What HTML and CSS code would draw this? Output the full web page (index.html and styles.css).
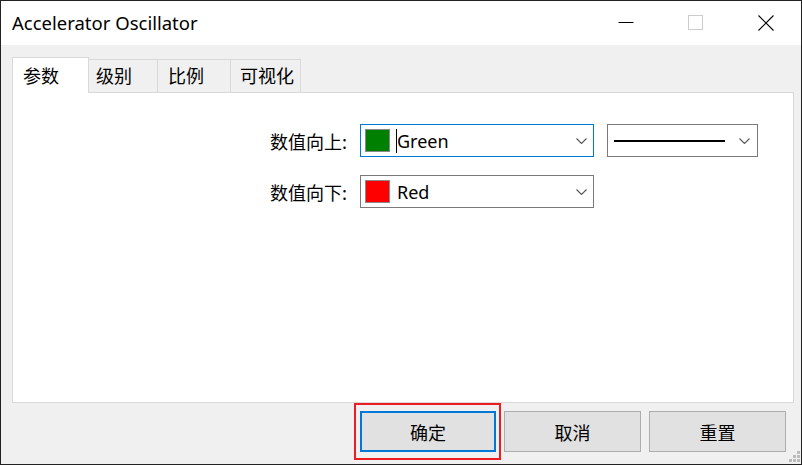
FILE: index.html
```
<!DOCTYPE html>
<html lang="zh-CN">
<head>
<meta charset="utf-8">
<title>Accelerator Oscillator</title>
<link rel="stylesheet" href="styles.css">
</head>
<body>
<div class="window">
  <div class="titlebar">
    <div class="title">Accelerator Oscillator</div>
    <div class="controls">
      <div class="ctl"><svg width="16" height="16" viewBox="0 0 16 16"><line x1="0.5" y1="7.5" x2="15.5" y2="7.5" stroke="#000" stroke-width="1"/></svg></div>
      <div class="ctl"><svg width="16" height="16" viewBox="0 0 16 16"><rect x="0.5" y="0.5" width="14" height="14" fill="none" stroke="#cccccc" stroke-width="1"/></svg></div>
      <div class="ctl"><svg width="16" height="16" viewBox="0 0 16 16"><path d="M0.5 0.5 L15.5 15.5 M15.5 0.5 L0.5 15.5" stroke="#000" stroke-width="1.1" fill="none"/></svg></div>
    </div>
  </div>
  <div class="content">
    <div class="tabs">
      <div class="tab active">参数</div>
      <div class="tab">级别</div>
      <div class="tab">比例</div>
      <div class="tab">可视化</div>
    </div>
    <div class="panel">
      <div class="form">
        <div class="lbl">数值向上:</div>
        <div class="combo focused">
          <span class="swatch green"></span><span class="caret"></span><span class="val">Green</span>
          <svg class="chev" width="11" height="6" viewBox="0 0 11 6"><path d="M0.5 0.5 L5.5 5.5 L10.5 0.5" fill="none" stroke="#555" stroke-width="1.1"/></svg>
        </div>
        <div class="combo linecombo">
          <span class="line"></span>
          <svg class="chev" width="11" height="6" viewBox="0 0 11 6"><path d="M0.5 0.5 L5.5 5.5 L10.5 0.5" fill="none" stroke="#555" stroke-width="1.1"/></svg>
        </div>
        <div class="lbl">数值向下:</div>
        <div class="combo">
          <span class="swatch red"></span><span class="val gap">Red</span>
          <svg class="chev" width="11" height="6" viewBox="0 0 11 6"><path d="M0.5 0.5 L5.5 5.5 L10.5 0.5" fill="none" stroke="#555" stroke-width="1.1"/></svg>
        </div>
        <div></div>
      </div>
    </div>
    <div class="buttons">
      <button class="btn default">确定</button>
      <button class="btn">取消</button>
      <button class="btn">重置</button>
    </div>
  </div>
  <svg class="grip" width="11" height="11" viewBox="0 0 11 11">
    <rect x="8" y="0" width="3" height="3" fill="#bcbcbc"/>
    <rect x="4" y="4" width="3" height="3" fill="#bcbcbc"/>
    <rect x="8" y="4" width="3" height="3" fill="#bcbcbc"/>
    <rect x="0" y="8" width="3" height="3" fill="#bcbcbc"/>
    <rect x="4" y="8" width="3" height="3" fill="#bcbcbc"/>
    <rect x="8" y="8" width="3" height="3" fill="#bcbcbc"/>
  </svg>
</div>
</body>
</html>
```
FILE: styles.css
```
html, body {
  margin: 0;
  padding: 0;
}
body {
  width: 802px;
  height: 465px;
  overflow: hidden;
  font-family: "Noto Sans", "Noto Sans CJK SC", sans-serif;
  color: #000;
}
.window {
  box-sizing: border-box;
  width: 802px;
  height: 465px;
  border: 1px solid #222;
  background: #f0f0f0;
  display: flex;
  flex-direction: column;
  position: relative;
}
.titlebar {
  height: 44px;
  background: #fff;
  display: flex;
  align-items: center;
  flex: none;
}
.title {
  flex: 1;
  padding-left: 11px;
  font-size: 18.5px;
  line-height: 24px;
}
.controls {
  display: flex;
  align-self: stretch;
}
.ctl {
  width: 70px;
  display: flex;
  align-items: center;
  justify-content: center;
}
.ctl svg {
  display: block;
}
.content {
  padding: 12px 7px 0 11px;
  display: flex;
  flex-direction: column;
}
.tabs {
  display: flex;
  align-items: flex-end;
  height: 35px;
}
.tab {
  box-sizing: border-box;
  height: 33px;
  border: 1px solid #d9d9d9;
  border-left: none;
  border-bottom: none;
  background: #f0f0f0;
  font-size: 18px;
  line-height: 31px;
  font-family: "Noto Sans CJK SC", sans-serif;
}
.tab:nth-child(2) { width: 69px; padding-left: 7px; }
.tab:nth-child(3) { width: 73px; padding-left: 10px; }
.tab:nth-child(4) { width: 70px; padding-left: 9px; }
.tab.active {
  width: 77px;
  height: 36px;
  margin-bottom: -1px;
  padding-left: 10px;
  border-left: 1px solid #d9d9d9;
  background: #fff;
  line-height: 34px;
  position: relative;
  z-index: 1;
}
.panel {
  box-sizing: border-box;
  width: 782px;
  height: 311px;
  background: #fff;
  border: 1px solid #d9d9d9;
  padding-top: 31px;
}
.form {
  display: grid;
  grid-template-columns: 334px 234px 151px;
  column-gap: 13px;
  row-gap: 18px;
  align-items: center;
}
.lbl {
  text-align: right;
  font-size: 18px;
  line-height: 24px;
  font-family: "Noto Sans CJK SC", sans-serif;
}
.combo {
  box-sizing: border-box;
  height: 33px;
  border: 1px solid #7a7a7a;
  background: #fff;
  display: flex;
  align-items: center;
  padding: 0 6px 0 4px;
}
.combo.focused {
  border-color: #0078d7;
}
.swatch {
  box-sizing: border-box;
  width: 25px;
  height: 23px;
  border: 1px solid #8a8a8a;
  flex: none;
}
.swatch.green { background: #008000; }
.swatch.red { background: #ff0000; }
.caret {
  width: 1px;
  height: 24px;
  background: #000;
  margin-left: 6px;
  flex: none;
}
.val {
  flex: 1;
  font-size: 18px;
  line-height: 24px;
}
.val.gap {
  margin-left: 7px;
}
.chev {
  display: block;
  flex: none;
}
.linecombo {
  padding-left: 6px;
  padding-right: 7px;
}
.line {
  width: 111px;
  height: 2px;
  background: #000;
  flex: none;
}
.linecombo .chev {
  margin-left: auto;
}
.buttons {
  display: flex;
  justify-content: flex-end;
  gap: 8px;
  margin-top: 8px;
  padding-right: 8px;
}
.btn {
  box-sizing: border-box;
  width: 137px;
  height: 41px;
  border: 1px solid #adadad;
  background: #e1e1e1;
  font-family: "Noto Sans CJK SC", sans-serif;
  font-size: 18px;
  color: #000;
  padding: 0;
  margin: 0;
  position: relative;
}
.btn.default {
  width: 136px;
  border: 2px solid #0078d7;
}
.btn.default::after {
  content: "";
  position: absolute;
  box-sizing: border-box;
  left: -8px;
  right: -7px;
  top: -10px;
  bottom: -10px;
  border: 2px solid #ed1c24;
}
.grip {
  position: absolute;
  right: 1px;
  bottom: 2px;
}
```
